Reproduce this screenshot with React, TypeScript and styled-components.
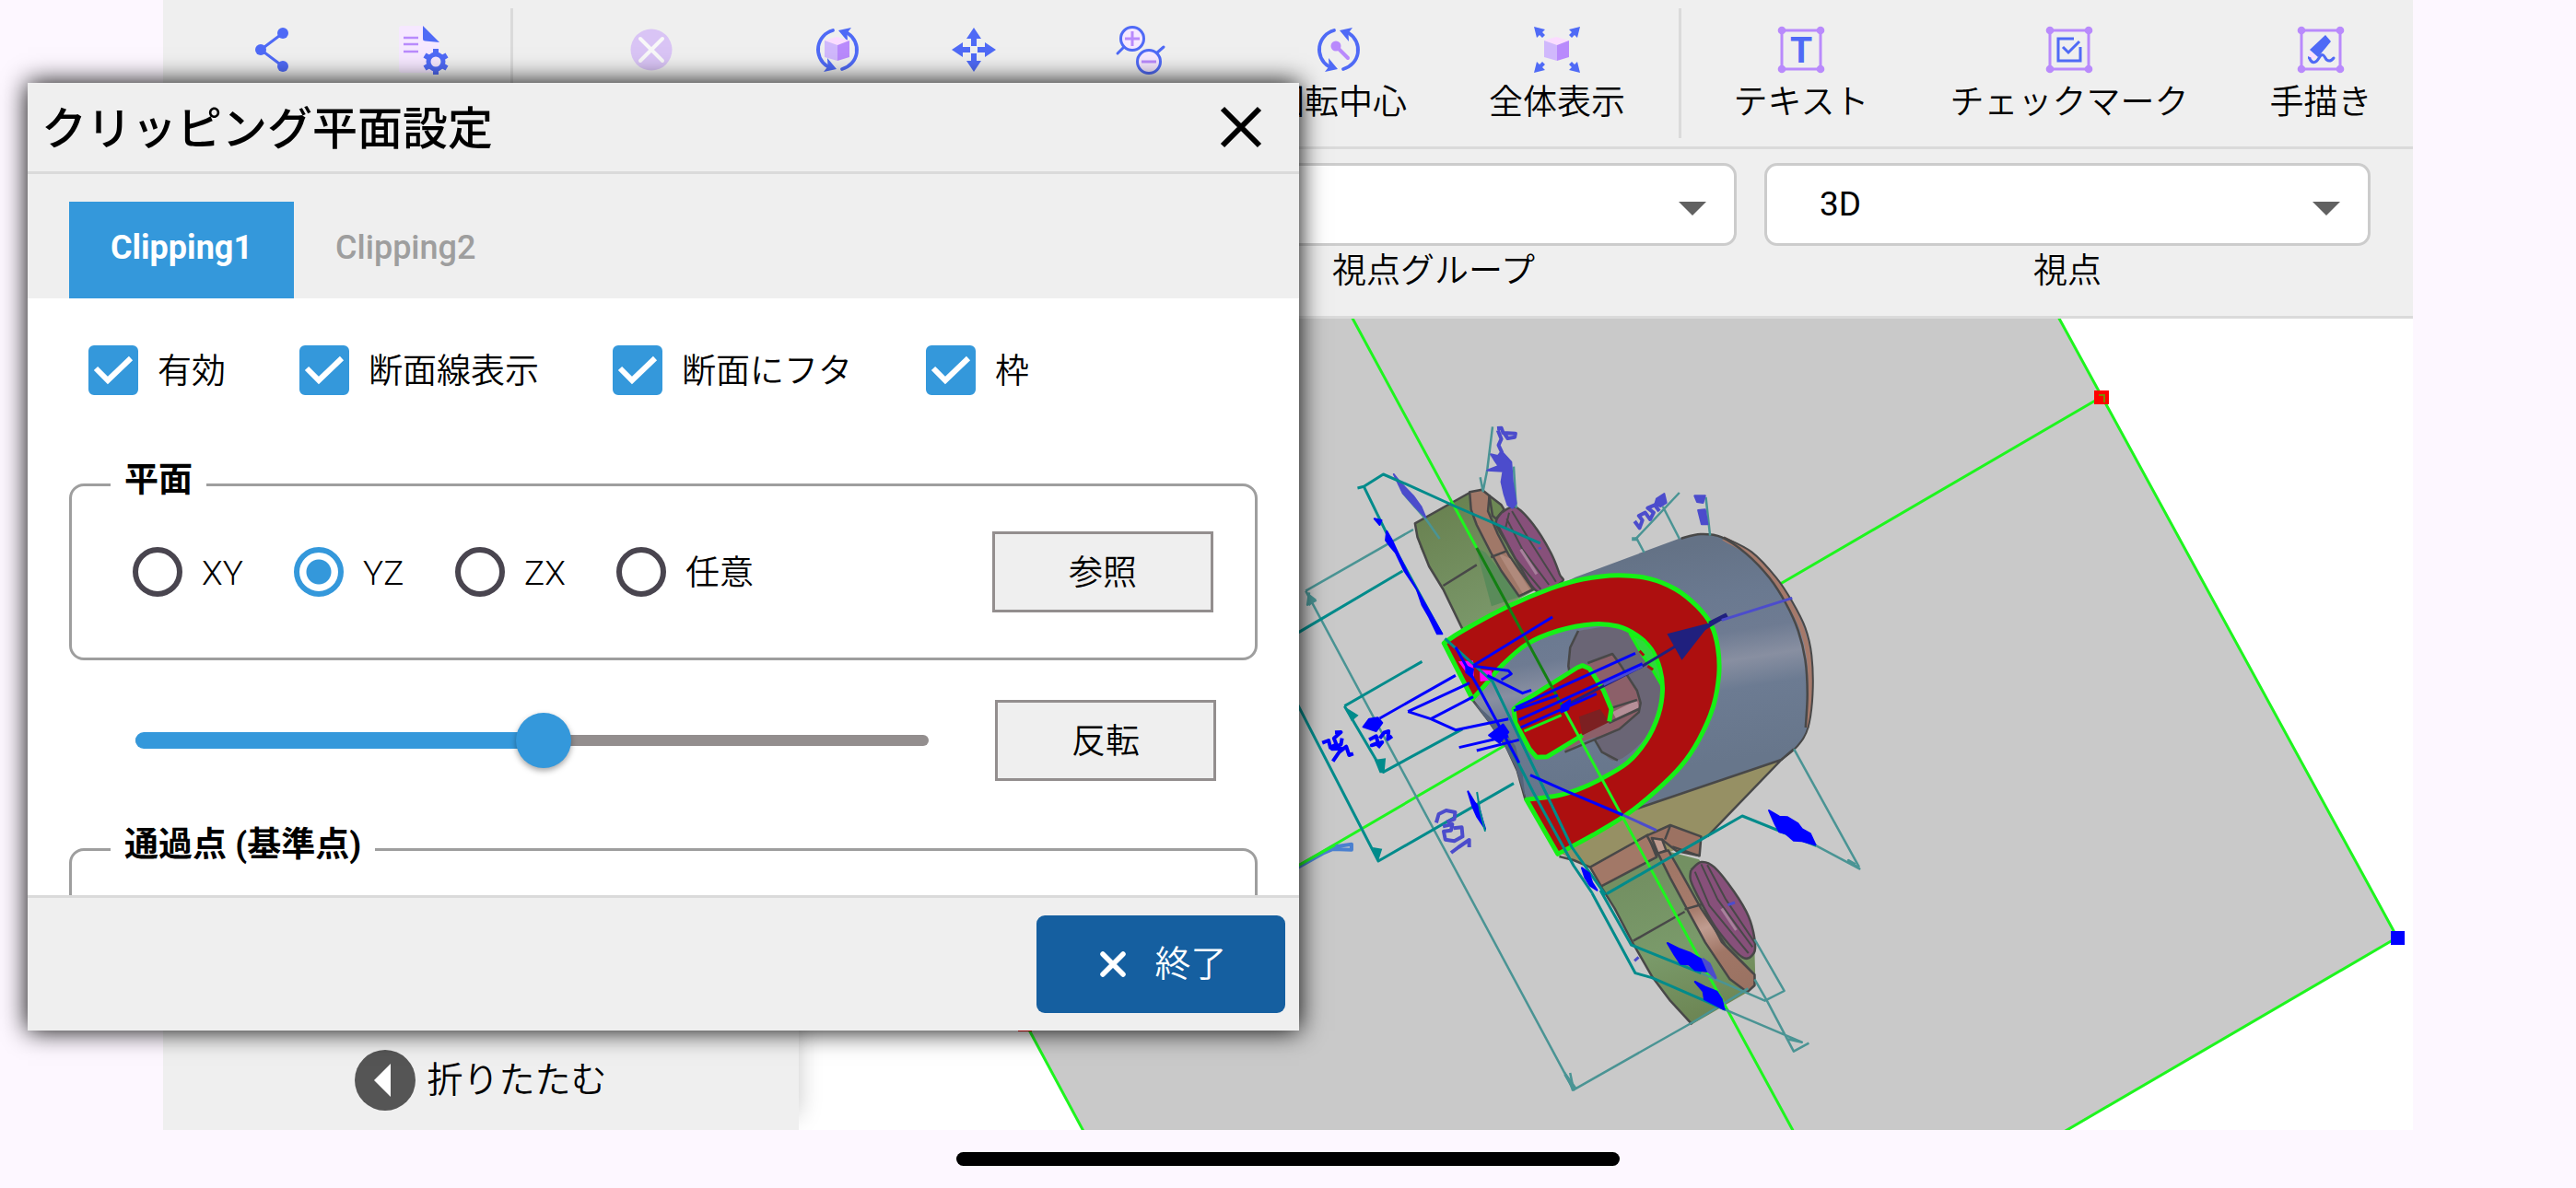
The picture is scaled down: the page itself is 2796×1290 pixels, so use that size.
import React, { useState } from "react";
import styled, { createGlobalStyle, css } from "styled-components";

const color = {
  page: "#fdf7ff",
  bar: "#efefef",
  rule: "#dadada",
  accent: "#3498db",
  primary: "#155fa0",
  frame: "#9e9e9e",
  edge: "#938e8e",
  ink: "#000000",
  iconBlue: "#4f6af6",
  iconPurple: "#b98afc",
  iconLilac: "#d0b8fc",
  iconPink: "#fbdcff",
};

const GlobalStyle = createGlobalStyle`
  * { box-sizing: border-box; }
  body {
    margin: 0;
    background: ${color.page};
    color: ${color.ink};
    font-family: Roboto, "Noto Sans CJK JP", sans-serif;
    font-size: 37px;
    font-weight: 350;
    line-height: 44px;
  }
  button, input, select { font: inherit; color: inherit; }
`;

/* ---------- Page ---------- */

const Screen = styled.div`
  position: relative;
  display: flex;
  flex-direction: column;
  height: 100vh;
  min-height: 900px;
  padding: 0 177px;
  overflow: hidden;
`;

const Toolbar = styled.header`
  display: flex;
  padding-left: 34px;
  background: ${color.bar};
  border-bottom: 3px solid ${color.rule};
`;

const Tool = styled.button<{ $span: number }>`
  flex: ${(p) => p.$span} 1 0;
  display: flex;
  flex-direction: column;
  align-items: center;
  gap: 8px;
  min-width: 0;
  height: 159px;
  padding: 26px 0 0;
  border: 0;
  background: none;
  white-space: nowrap;
`;

const ToolDivider = styled.span`
  flex: 28 1 0;
  display: flex;
  justify-content: center;
  padding: 9px 0;

  &::before {
    content: "";
    width: 3px;
    background: ${color.rule};
  }
`;

const ViewBar = styled.section`
  display: flex;
  justify-content: flex-end;
  gap: 30px;
  height: 184px;
  padding: 15px 46px 0;
  background: ${color.bar};
  border-bottom: 3px solid ${color.rule};
`;

const Field = styled.label`
  display: flex;
  flex-direction: column;
  align-items: center;
  gap: 6px;
  width: 28%;
`;

const SelectBox = styled.span`
  position: relative;
  width: 100%;
`;

const Select = styled.select`
  display: block;
  appearance: none;
  width: 100%;
  height: 90px;
  padding: 0 90px 0 57px;
  border: 3px solid #cccccc;
  border-radius: 14px;
  background: #ffffff;
  font-weight: 400;
`;

const SelectArrow = styled.svg`
  position: absolute;
  right: 33px;
  top: 42px;
  width: 30px;
  height: 15px;
  pointer-events: none;
`;

const Stage = styled.main`
  flex: 1;
  display: grid;
  grid-template-columns: 100%;
  grid-template-rows: 100%;
  min-height: 0;
  overflow: hidden;
  background: #ffffff;
`;

const Model = styled.svg`
  grid-area: 1 / 1;
  display: block;
  width: 100%;
  height: 100%;

  path, polygon, polyline, line { vector-effect: non-scaling-stroke; }
`;

const SidePanel = styled.aside`
  grid-area: 1 / 1;
  display: flex;
  flex-direction: column;
  justify-content: flex-end;
  width: 690px;
  background: ${color.bar};
  box-shadow: 0 -16px 24px rgba(0, 0, 0, 0.22);
`;

const CollapseButton = styled.button`
  display: flex;
  align-items: center;
  justify-content: center;
  gap: 12px;
  height: 108px;
  padding: 0;
  border: 0;
  background: none;
  font-size: 39px;
`;

const HomeArea = styled.footer`
  display: flex;
  justify-content: center;
  height: 63px;
  padding-top: 24px;
`;

const HomeIndicator = styled.span`
  width: 720px;
  height: 15px;
  border-radius: 8px;
  background: #000000;
`;

/* ---------- Dialog ---------- */

const Dialog = styled.section`
  position: absolute;
  left: 30px;
  top: 90px;
  bottom: 171px;
  width: 1380px;
  max-width: calc(100% - 60px);
  display: flex;
  flex-direction: column;
  background: #ffffff;
  box-shadow: 0 0 26px #000000;
`;

const DialogHeader = styled.header`
  display: flex;
  align-items: center;
  justify-content: space-between;
  height: 99px;
  padding: 0 35px 0 15px;
  background: ${color.bar};
  border-bottom: 3px solid ${color.rule};
`;

const DialogTitle = styled.h1`
  margin: 0;
  padding-top: 6px;
  font-size: 49px;
  font-weight: 500;
  line-height: 60px;
`;

const IconButton = styled.button`
  display: flex;
  padding: 0;
  border: 0;
  background: none;
`;

const Tabs = styled.div`
  display: flex;
  align-items: flex-end;
  height: 135px;
  padding: 0 45px;
  background: ${color.bar};
`;

const Tab = styled.button<{ $active?: boolean }>`
  height: 105px;
  padding: 0 45px 6px;
  border: 0;
  font-size: 36px;
  font-weight: ${(p) => (p.$active ? 700 : 500)};
  background: ${(p) => (p.$active ? color.accent : "transparent")};
  color: ${(p) => (p.$active ? "#ffffff" : "#9e9e9e")};
`;

const DialogBody = styled.div`
  flex: 1;
  min-height: 0;
  overflow: hidden;
  padding: 51px 45px 0;
`;

const CheckRow = styled.div`
  display: flex;
  gap: 80px;
  padding-left: 21px;
`;

const Option = styled.label`
  display: flex;
  align-items: center;
  gap: 21px;
  white-space: nowrap;
`;

const OptionText = styled.span`
  min-width: 49px;
  padding-top: 4px;
`;

const marker = css`
  appearance: none;
  flex: none;
  width: 54px;
  height: 54px;
  margin: 0;
`;

const CheckBox = styled.span`
  display: grid;
  > * { grid-area: 1 / 1; }
  > svg { pointer-events: none; visibility: hidden; }
  > input:checked + svg { visibility: visible; }
`;

const CheckInput = styled.input`
  ${marker}
  border: 6px solid #49454f;
  border-radius: 6px;
  &:checked { border-color: ${color.accent}; background: ${color.accent}; }
`;

const RadioInput = styled.input`
  ${marker}
  border: 6px solid #49454f;
  border-radius: 50%;
  &:checked {
    border-color: ${color.accent};
    background: radial-gradient(circle, ${color.accent} 13px, transparent 14px);
  }
`;

const Group = styled.fieldset<{ $top: number }>`
  min-width: 0;
  margin: ${(p) => p.$top}px 0 0;
  padding: 25px 45px 49px 66px;
  border: 3px solid ${color.frame};
  border-radius: 16px;
`;

const GroupTitle = styled.legend`
  margin-left: -24px;
  padding: 0 15px 8px;
  font-weight: 700;
`;

const GroupRow = styled.div`
  display: flex;
  align-items: center;
  justify-content: space-between;
  min-height: 88px;
`;

const RadioRow = styled.div`
  display: flex;
  gap: 51px;
`;

const PlainButton = styled.button`
  width: 240px;
  height: 88px;
  padding: 4px 0 0;
  border: 3px solid ${color.edge};
  background: ${color.bar};
`;

const SliderRow = styled.div`
  display: flex;
  align-items: center;
  gap: 72px;
  margin-top: 43px;
  padding: 0 45px 0 72px;
`;

const Slider = styled.div`
  flex: 1;
  display: grid;
  align-items: center;
  > * { grid-area: 1 / 1; }
`;

const Track = styled.span`
  height: 12px;
  border-radius: 6px;
  background: ${color.edge};
`;

const ActiveTrack = styled.span`
  height: 18px;
  border-radius: 9px;
  background: ${color.accent};
`;

const Range = styled.input`
  appearance: none;
  width: 100%;
  height: 60px;
  margin: 0;
  background: none;

  &::-webkit-slider-thumb {
    appearance: none;
    width: 60px;
    height: 60px;
    border-radius: 50%;
    background: ${color.accent};
    box-shadow: 0 3px 6px rgba(0, 0, 0, 0.35);
  }
`;

const DialogFooter = styled.footer`
  display: flex;
  align-items: center;
  justify-content: flex-end;
  height: 147px;
  padding: 0 15px;
  background: ${color.bar};
  border-top: 3px solid ${color.rule};
`;

const PrimaryButton = styled.button`
  display: flex;
  align-items: center;
  justify-content: center;
  gap: 25px;
  width: 270px;
  height: 106px;
  border: 0;
  border-radius: 9px;
  background: ${color.primary};
  color: #ffffff;
  font-size: 39px;
`;

/* ---------- Icons ---------- */

const Glyph = ({ children }: { children: React.ReactNode }) => (
  <svg width="56" height="56" viewBox="0 0 56 56" fill="none" aria-hidden="true">
    {children}
  </svg>
);

const ShareIcon = () => (
  <Glyph>
    <path d="M40 10 16 28l24 18" stroke={color.iconBlue} strokeWidth="3" />
    <g fill={color.iconBlue}>
      <circle cx="40" cy="10" r="6" />
      <circle cx="16" cy="28" r="6" />
      <circle cx="40" cy="46" r="6" />
    </g>
  </Glyph>
);

const DocSettingsIcon = () => (
  <Glyph>
    <path d="M4 2h23l18 18v33H4a3 3 0 0 1-3-3V5a3 3 0 0 1 3-3z" fill="#f6e8ff" />
    <path d="M6 15h16M6 22h16M6 30h16" stroke={color.iconPurple} strokeWidth="2.4" />
    <path d="M27 2v14q0 2.500 2.500 2.500L45 20z" fill={color.iconBlue} />
    <circle cx="41" cy="41" r="8" stroke={color.iconBlue} strokeWidth="5" />
    <path
      d="M41 27v5M41 50v5M29 34l4.500 2.600M48.500 45.400 53 48M29 48l4.500-2.600M48.500 36.600 53 34"
      stroke={color.iconBlue}
      strokeWidth="6"
    />
  </Glyph>
);

const CancelIcon = () => (
  <Glyph>
    <circle cx="28" cy="28" r="22.500" fill="#d9c4f5" />
    <path d="M16 16l24 24M40 16 16 40" stroke="#f8f8f8" strokeWidth="4" strokeLinecap="round" />
  </Glyph>
);

const Orbit = () => (
  <>
    <path
      d="M23 7A21.500 21.500 0 0 0 17 46M33 49A21.500 21.500 0 0 0 39 10"
      stroke={color.iconBlue}
      strokeWidth="3.800"
      strokeLinecap="round"
    />
    <path d="M43 4 29 7l10 12-.5-9zM13 52l14-3-10-12 .5 9z" fill={color.iconBlue} />
  </>
);

const Cube = () => (
  <>
    <path d="M27 14l14 4-13 5-14-5z" fill={color.iconPink} />
    <path d="M14 18l14 5v17l-14-4z" fill={color.iconLilac} />
    <path d="M28 23l13-5v18l-13 4z" fill={color.iconPurple} />
  </>
);

const RotateIcon = () => (
  <Glyph>
    <Orbit />
    <Cube />
  </Glyph>
);

const MoveIcon = () => (
  <Glyph>
    {[0, 90, 180, 270].map((a) => (
      <path
        key={a}
        d="M28 4l8 12h-5v8h-6v-8h-5z"
        fill={color.iconBlue}
        transform={`rotate(${a} 28 28)`}
      />
    ))}
  </Glyph>
);

const ZoomIcon = () => (
  <Glyph>
    <g stroke={color.iconBlue} strokeWidth="3" strokeLinecap="round" fill="#f6e8ff">
      <path d="M10 25l-7 7M45 32l8-7" />
      <circle cx="19" cy="16" r="12.500" />
      <circle cx="37" cy="41" r="12.500" />
    </g>
    <path d="M11 16h16M19 8v16M29 41h16" stroke={color.iconPurple} strokeWidth="3" />
  </Glyph>
);

const PivotIcon = () => (
  <Glyph>
    <Orbit />
    <circle cx="25" cy="24" r="5.500" fill={color.iconPurple} />
    <path d="M26 25l12 12" stroke={color.iconPurple} strokeWidth="4" strokeLinecap="round" />
  </Glyph>
);

const FitIcon = () => (
  <Glyph>
    <Cube />
    {[0, 90, 180, 270].map((a) => (
      <path
        key={a}
        d="M3 3l12 3-3 3 3 3-3 3-3-3-3 3z"
        fill={color.iconBlue}
        transform={`rotate(${a} 28 28)`}
      />
    ))}
  </Glyph>
);

const Frame = () => (
  <>
    <rect x="7" y="7" width="42" height="42" stroke={color.iconPurple} strokeWidth="3" />
    <g fill={color.iconPurple}>
      <circle cx="7" cy="7" r="4.300" />
      <circle cx="49" cy="7" r="4.300" />
      <circle cx="7" cy="49" r="4.300" />
      <circle cx="49" cy="49" r="4.300" />
    </g>
  </>
);

const TextIcon = () => (
  <Glyph>
    <Frame />
    <text x="28" y="42" textAnchor="middle" fontSize="39" fontWeight="700" fill={color.iconBlue}>
      T
    </text>
  </Glyph>
);

const CheckMarkIcon = () => (
  <Glyph>
    <Frame />
    <path d="M33 16H16v24h24V25" stroke={color.iconBlue} strokeWidth="3" />
    <path d="M21 25l6 6 12-12" stroke={color.iconBlue} strokeWidth="3" />
  </Glyph>
);

const FreehandIcon = () => (
  <Glyph>
    <Frame />
    <path d="M33 12l6 7-14 17-9-8z" fill={color.iconBlue} />
    <path d="M16 29l8 7-5 2-4-2z" fill={color.iconPink} />
    <path d="M14 35l4 2-4 1z" fill={color.iconBlue} />
    <path
      d="M16 38c3 6 7 4 10-1s5-4 7 0 6 4 9 0"
      stroke={color.iconBlue}
      strokeWidth="3"
      strokeLinecap="round"
    />
  </Glyph>
);

/* ---------- 3D view ---------- */

const line = "#484848";
const cutGreen = "#16f016";
const teal = "#008b8b";
const tealBack = "#4a9494";
const blueBack = "#4c4ccc";

type Point = [number, number];

/* Catmull-Rom segments through the points, starting at the first one. */
const curve = (pts: Point[]) =>
  pts
    .slice(0, -1)
    .map((p, i) => {
      const before = pts[i - 1] ?? p;
      const next = pts[i + 1];
      const after = pts[i + 2] ?? next;
      const c1 = [p[0] + (next[0] - before[0]) / 6, p[1] + (next[1] - before[1]) / 6];
      const c2 = [next[0] - (after[0] - p[0]) / 6, next[1] - (after[1] - p[1]) / 6];
      return `C${c1.join(" ")} ${c2.join(" ")} ${next.join(" ")}`;
    })
    .join("");

const from = (pts: Point[]) => `M${pts[0].join(" ")}${curve(pts)}`;

const archOuter: Point[] = [
  [437, 775], [490, 735], [620, 655], [740, 597], [830, 567], [930, 554], [1020, 565], [1095, 600],
  [1155, 655], [1195, 715], [1214, 790], [1217, 880], [1200, 985], [1160, 1090], [1110, 1175],
  [1040, 1255], [957, 1332], [860, 1400], [760, 1462],
];
const archInner: Point[] = [
  [671, 1285], [758, 1272], [817, 1252], [875, 1222], [957, 1165], [1010, 1095], [1045, 1010],
  [1057, 930], [1050, 860], [1025, 795], [985, 750], [930, 720], [860, 713], [760, 735], [670, 780],
  [600, 850], [555, 910], [518, 957],
];
const rimOuter: Point[] = [
  [1230, 430], [1310, 478], [1380, 562], [1425, 640], [1462, 725], [1480, 815], [1483, 940],
  [1470, 1050], [1440, 1110], [1394, 1155],
];
const rimBand: Point[] = [
  [1230, 434], [1302, 482], [1371, 564], [1417, 645], [1453, 730], [1472, 820], [1476, 940],
  [1467, 1050],
];
const rimInner: Point[] = [
  [1110, 434], [1165, 420], [1225, 430], [1295, 484], [1360, 562], [1408, 648], [1442, 735],
  [1462, 830], [1468, 940], [1463, 1050],
];
const bore: Point[] = [
  [818, 735], [900, 722], [960, 738], [1025, 800], [1055, 870], [1050, 960], [1010, 1080],
  [930, 1157], [885, 1125], [860, 1060], [800, 920], [788, 850], [800, 780], [818, 735],
];
const upperDisc: Point[] = [
  [600, 350], [640, 332], [690, 388], [740, 480], [765, 550], [772, 575], [705, 608], [655, 530],
  [615, 450], [585, 385], [600, 350],
];
const lowerDisc: Point[] = [
  [975, 495], [1000, 468], [1032, 485], [1080, 565], [1115, 645], [1130, 720], [1128, 765],
  [1100, 778], [1040, 690], [1000, 600], [975, 530], [975, 495],
];

const ClippedModel = () => (
  <Model viewBox="177 346 2442 881" preserveAspectRatio="xMidYMid slice" fill="none" role="img" aria-label="3D">
    <defs>
      <linearGradient id="barrel" gradientUnits="userSpaceOnUse" x1="1000" y1="480" x2="1130" y2="1180">
        <stop offset="0" stopColor="#647286" />
        <stop offset="0.25" stopColor="#6a7990" />
        <stop offset="0.42" stopColor="#6e7b92" />
        <stop offset="0.55" stopColor="#888fa1" />
        <stop offset="0.68" stopColor="#6c7b92" />
        <stop offset="1" stopColor="#67768b" />
      </linearGradient>
      <linearGradient id="leaf" gradientUnits="userSpaceOnUse" x1="400" y1="360" x2="560" y2="680">
        <stop offset="0" stopColor="#6a8352" />
        <stop offset="1" stopColor="#799668" />
      </linearGradient>
      <linearGradient id="leafLow" gradientUnits="userSpaceOnUse" x1="820" y1="540" x2="1000" y2="980">
        <stop offset="0" stopColor="#739062" />
        <stop offset="0.5" stopColor="#7a9a6a" />
        <stop offset="1" stopColor="#6c8553" />
      </linearGradient>
      <linearGradient id="rod" gradientUnits="userSpaceOnUse" x1="920" y1="480" x2="1110" y2="880">
        <stop offset="0" stopColor="#a07666" />
        <stop offset="0.35" stopColor="#a67c6c" />
        <stop offset="0.5" stopColor="#c09c90" />
        <stop offset="0.7" stopColor="#a07666" />
        <stop offset="1" stopColor="#9a7262" />
      </linearGradient>
    </defs>

    {/* clipping plane */}
    <polygon points="1400,300 2210,300 2602,1018 2235,1232 1178,1232 1117,1119 900,715" fill="#c9c9c9" />
    <g stroke="#1ef51e" strokeWidth="3">
      <path d="M2210 300 2602 1018 2235 1232M1178 1232 1105 1096" />
      <path d="M2281 431 1874 668M1634 809 1380 957" />
    </g>
    <rect x="2273" y="424" width="16" height="15" fill="#ff0000" />
    <path d="M2278 429h6v8" stroke="#7a8a00" strokeWidth="2" />
    <rect x="2595" y="1011" width="15" height="15" fill="#0000ff" />
    <rect x="1105" y="1105" width="15" height="15" fill="#ff0000" />

    {/* upper arm */}
    <g transform="translate(1400 440) scale(0.38265 0.33333)" strokeWidth="2.500" strokeLinejoin="round">
      <path d="M355 385 460 320 510 285 560 295 605 340 650 420 700 600 490 730 435 600 395 525 370 465z" fill="url(#leaf)" />
      <path d="M510 285 355 385 362 430 395 525 435 600 490 730M435 588 530 520" stroke={line} />
      <path d="M528 462 555 480 640 600 650 625 572 655 545 540z" fill="#5a8b5a" />
      <path d="M510 283 545 275 566 295 562 345 590 420 622 490 690 600 650 622 600 540 570 480 530 390 514 340z" fill="#a07868" stroke={line} />
      <path d="M590 480 625 500 680 600 660 612z" fill="#b08a7c" />
      <path d="M570 495 615 475" stroke={line} />
      <path d="M566 295 600 325 608 340 585 370 575 360z" fill="#6d8854" stroke={line} />
      <path d={from(upperDisc)} fill="#87507a" stroke={line} />
      <path d="M630 345 680 440 755 575M615 370 660 470 735 585M590 390 640 500 712 600M622 350 612 400" stroke={line} strokeWidth="2" />
      <path d="M655 470 700 550" stroke="#a8819c" strokeWidth="3" />

      {/* barrel */}
      <path
        d={`M810 560 1110 432 1165 418 1230 430${curve(rimOuter)}L957 1325 667 1285 640 1180 610 1110 560 1020 500 930 700 620z`}
        fill="url(#barrel)"
      />
      <path d={from(rimBand)} stroke="#a5796a" strokeWidth="5" />
      <path d={from(rimInner)} stroke={line} />
      <path d={from(rimOuter)} stroke={line} strokeWidth="2" />
      <path d="M518 960 565 1030 615 1115 645 1190 668 1285" stroke={line} />
      <path d="M520 965 600 1050 640 1110 660 1200 668 1280 640 1180 600 1090z" fill="#56647a" />

      {/* bore */}
      <path d={from(bore)} fill="#6a6575" />
      <path d="M818 735 795 790 790 850 800 900M865 1090 885 1130 930 1157" stroke={line} />
      <path d="M840 845 915 810 935 840 980 925 995 980 985 1010 930 1060 830 1095 780 1130z" fill="#8c6069" />
      <path d="M915 1000 985 960 990 985 925 1020z" fill="#b58f97" />
      <path d="M845 840 915 810 940 850 985 930 995 970 990 1000 935 1055 780 1130M915 985 985 960M905 1035 990 990" stroke={line} />
    </g>

    {/* lower arm */}
    <g transform="translate(1400 780) scale(0.44643 0.33333)" strokeWidth="2.500" strokeLinejoin="round">
      <path d="M650 435 820 305 1195 135 1015 385 880 460 730 485 685 458z" fill="#969064" />
      <path d="M820 305 1195 135 1225 100M1195 135 1015 385M655 450 690 462 730 485" stroke={line} />
      <path d="M755 545 880 455 910 430 995 460 1060 620 1130 760 1132 860 1115 890 978 997 925 920 880 840 835 735 790 620z" fill="url(#leafLow)" />
      <path d="M755 545 790 620 835 735 880 840 925 920 978 997M835 725 960 630" stroke={line} />
      <path d="M730 485 870 380 892 452 757 547z" fill="#a27867" stroke={line} />
      <path d="M868 382 925 348 1000 385 996 448 940 432 905 395 895 445z" fill="#9c7262" stroke={line} />
      <path d="M880 390 905 395 915 430 895 440z" fill="#c09c90" stroke={line} />
      <path d="M925 350 912 395M930 418 996 448" stroke={line} />
      <path d="M895 440 920 430 950 500 1000 620 1060 740 1130 835 1130 870 1112 892 1070 850 1010 730 965 620 925 520z" fill="url(#rod)" stroke={line} />
      <path d="M960 622 1002 606" stroke={line} />
      <path d={from(lowerDisc)} fill="#87507a" stroke={line} />
      <path d="M1000 475 1040 590 1125 745M985 500 1020 610 1115 765M1015 478 1060 590 1130 730M1000 600 1050 730 1125 830" stroke={line} strokeWidth="2" />
      <path d="M1050 620 1085 690" stroke="#a8819c" strokeWidth="3" />
    </g>

    <g transform="translate(1400 440) scale(0.38265 0.33333)" strokeWidth="3" strokeLinejoin="round">
      {/* section faces */}
      <path
        d={`${from(archOuter)}L671 1285${curve(archInner)}z`}
        fill="#ad0f0f"
        stroke={cutGreen}
        strokeWidth="5"
      />
      <path d="M965 745 1005 765 1030 800 1052 870 1056 915 1025 855 1000 815z" fill="#30d83c" stroke={cutGreen} />
      <path d="M992 800 1004 815M1015 850 1030 862" stroke="#ad0f0f" />
      <path d="M635 990 655 970 815 855 830 848 850 858 890 930 912 990 906 1030 830 1075 730 1145 700 1147 680 1120 640 1035z" fill="#ad0f0f" />
      <path d="M820 1015 880 990 906 1032 830 1075z" fill="#7c2022" />
      <path d="M906 1030 912 990 890 930 850 858 830 848 815 855 655 970 635 990 640 1035 680 1120 700 1147 730 1145 830 1075" stroke={cutGreen} strokeWidth="5" />
      <path d="M665 1062 770 1010" stroke={cutGreen} />

      {/* centre line */}
      <path d="M150 -342 530 465M775 985 1440 2390" stroke="#1ef51e" />
      <path d="M530 465 775 985" stroke="#138013" />

      {/* axis */}
      <path d="M770 985 1000 850 1240 685" stroke="#20207e" />
      <path d="M890 910 1000 850" stroke={blueBack} />
      <path d="M1070 745 1195 708 1112 830z" fill="#20207e" />
      <path d="M1190 712 1240 683" stroke="#20207e" strokeWidth="5" />
      <path d="M1225 700 1425 628" stroke={blueBack} />

      {/* picked point */}
      <path d="M478 835 520 832 522 885 500 870zM538 862 572 865 575 895 540 900z" fill="#ff00ff" />

      {/* dimension lines behind the plane */}
      <g stroke={tealBack} strokeWidth="2.500">
        <path d="M45 605 350 405M45 605 805 2230 1143 2010 1300 1900" />
        <path d="M575 70 560 210 548 280 540 235M635 200 642 335M320 285 385 370 425 435" />
        <path d="M1105 285 980 437M1058 330 1105 435M985 437 1005 480M1180 300 1192 425" />
        <path d="M55 610 50 650 75 635M1430 1120 1615 1505M795 2175 805 2230 780 2180" />
      </g>
      <path d="M48 608 75 632 55 655zM970 430h18v12h-18zM780 2170 815 2225 800 2235z" fill={tealBack} />
      <g fill={blueBack} stroke={blueBack} strokeWidth="2">
        <path d="M570 160 590 165 600 150 628 185 632 250 642 320 632 335 618 325 608 290 600 250 605 215 560 212 592 198 580 178z" />
        <path d="M295 225 312 250 350 295 372 330 385 365 355 330 320 285z" />
        <path d="M1035 325 1040 305 1062 288 1068 318 1052 330zM1158 342 1178 340 1185 388 1168 388zM1148 295 1178 295 1172 318 1155 315z" />
        <path d="M705 466h8" />
      </g>
      <g stroke={blueBack} strokeWidth="4">
        <path d="M588 75 600 74 605 90 640 92 638 104 618 108 608 92M590 82 600 110 592 130 602 155" />
        <path d="M978 378 992 400 1000 375 990 360 1008 350 1022 372 1032 350 1015 335 1035 325 1048 345" />
      </g>

      {/* dimension lines in front */}
      <g stroke={teal} strokeWidth="3">
        <path d="M192 270 210 265 265 225 340 262 470 330 710 450" />
        <path d="M210 265 280 430 430 745M25 740 320 540" />
        <path d="M155 980 375 835M155 980 265 1195 490 1055M20 970 251 1485 635 1232" />
        <path d="M440 760 575 900 725 1260 800 1440 895 1595M610 1080 690 1260 805 1500 858 1590" />
      </g>
      <path d="M155 982 195 1010 175 1030zM240 1155 272 1150 268 1198 255 1198zM235 1440 262 1445 250 1488z" fill={teal} />

      <g stroke="#0000ff" strokeWidth="3">
        <path d="M520 848 745 690M470 788 540 930 650 1165" />
        <path d="M255 1020 470 880M335 998 510 905M335 998 400 1022 470 1058 620 1022M400 1022 520 950M520 850 620 865 628 875 600 895M560 880 660 938 685 928" />
        <path d="M635 995 760 945M640 985 980 808M650 1025 1000 842M655 1050 870 940" />
        <path d="M480 1115 620 1078M530 1125 650 1090M682 1205 780 1255 945 1335" />
      </g>
      <path d="M945 1335 1040 1385" stroke={blueBack} />
      <g fill="#0000ff" stroke="#0000ff" strokeWidth="2">
        <path d="M240 370 260 375 255 390zM275 410 290 440 310 490 340 560 365 610 400 680 432 745 418 745 395 690 375 650 360 600 325 540 300 480 285 460 272 440z" />
        <path d="M225 1022 250 1018 262 1035 245 1062 208 1048zM565 1075 605 1040 620 1065 595 1100zM770 980 795 960 790 990 770 1000zM500 850 520 860 515 885 500 870z" />
      </g>
      <g stroke="#0000ff" strokeWidth="4">
        <path d="M225 1090 245 1078 250 1100 232 1108 262 1098 250 1115M255 1085 268 1066 280 1062 278 1088 290 1078" />
        <path d="M92 1100 110 1092 115 1115 132 1105 125 1085 145 1065 128 1066M148 1085 145 1105 120 1120 150 1118M122 1160 140 1130 160 1112 168 1140 180 1135" />
      </g>
    </g>

    <g transform="translate(1400 780) scale(0.44643 0.33333)" strokeWidth="3" strokeLinejoin="round">
      <g stroke={teal}>
        <path d="M770 572 1000 395 1100 318 1280 415" />
        <path d="M735 570 840 830 880 845 1060 950M755 560 830 738 1000 830" />
      </g>
      <g stroke={tealBack} strokeWidth="2.500">
        <path d="M1280 415 1385 490 1358 462 1375 475M1000 830 1155 920 1202 888 1130 720M1130 850 1160 920 1225 1085 1262 1058M1060 950 1245 1055 1210 1045" />
      </g>
      <g fill="#0000ff" stroke="#0000ff" strokeWidth="2">
        <path d="M1165 300 1190 320 1210 322 1235 342 1245 360 1265 375 1278 412 1245 400 1225 398 1205 375 1190 370 1180 345z" />
        <path d="M918 732 945 750 975 765 1000 785 1018 825 985 820 970 802 950 800 935 770z" />
        <path d="M985 858 1010 875 1038 890 1050 915 1056 948 1030 930 1008 915 1005 890z" />
        <path d="M710 487 728 505 735 535 747 560 730 545 718 520z" />
        <path d="M433 238 450 275 460 290 468 330 475 360 455 320 445 290z" />
      </g>
      <path d="M1005 785 1020 800 1035 845 1018 825zM1065 608 1082 600M838 790 848 778" fill={blueBack} stroke={blueBack} />
      <path
        d="M356 340 362 312 380 300 402 306 400 328 382 338M372 352 395 345 392 365 374 368 378 395 400 400 420 385 418 355 398 358M392 438 410 420 436 396 436 420"
        stroke={blueBack}
        strokeWidth="4"
      />
      <path d="M455 240 462 300 475 368" stroke={teal} strokeWidth="2" />
      <path d="M20 485 80 440 100 420 150 410 150 428 105 426 80 440" stroke="#4a80d0" strokeWidth="4" />
      <path d="M20 480 110 412" stroke="#1ef51e" />
    </g>
  </Model>
);

/* ---------- Parts ---------- */

const ViewSelect = ({ label, options }: { label: string; options: string[] }) => (
  <Field>
    <SelectBox>
      <Select>
        {options.map((o) => (
          <option key={o}>{o}</option>
        ))}
      </Select>
      <SelectArrow viewBox="0 0 30 15" aria-hidden="true">
        <path d="M0 0h30L15 15z" fill="#616161" />
      </SelectArrow>
    </SelectBox>
    {label}
  </Field>
);

const CheckOption = ({ label }: { label: string }) => (
  <Option>
    <CheckBox>
      <CheckInput type="checkbox" defaultChecked />
      <svg width="54" height="54" viewBox="0 0 54 54" fill="none" aria-hidden="true">
        <path d="M8 25l13 13 25-24" stroke="#ffffff" strokeWidth="6" />
      </svg>
    </CheckBox>
    <OptionText>{label}</OptionText>
  </Option>
);

const planes = ["XY", "YZ", "ZX", "任意"];
const checks = ["有効", "断面線表示", "断面にフタ", "枠"];
const sliderMax = 1000;

const ClippingDialog = () => {
  const [plane, setPlane] = useState("YZ");
  const [offset, setOffset] = useState(516);

  return (
    <Dialog role="dialog" aria-labelledby="clipping-title">
      <DialogHeader>
        <DialogTitle id="clipping-title">クリッピング平面設定</DialogTitle>
        <IconButton type="button" aria-label="閉じる">
          <svg width="56" height="56" viewBox="0 0 56 56" fill="none" aria-hidden="true">
            <path d="M8 8l40 40M48 8 8 48" stroke="#000000" strokeWidth="6" />
          </svg>
        </IconButton>
      </DialogHeader>

      <Tabs role="tablist">
        <Tab type="button" role="tab" aria-selected="true" $active>
          Clipping1
        </Tab>
        <Tab type="button" role="tab" aria-selected="false">
          Clipping2
        </Tab>
      </Tabs>

      <DialogBody>
        <CheckRow>
          {checks.map((c) => (
            <CheckOption key={c} label={c} />
          ))}
        </CheckRow>

        <Group $top={71}>
          <GroupTitle>平面</GroupTitle>
          <GroupRow>
            <RadioRow>
              {planes.map((p) => (
                <Option key={p}>
                  <RadioInput
                    type="radio"
                    name="plane"
                    checked={plane === p}
                    onChange={() => setPlane(p)}
                  />
                  <OptionText>{p}</OptionText>
                </Option>
              ))}
            </RadioRow>
            <PlainButton type="button">参照</PlainButton>
          </GroupRow>
        </Group>

        <SliderRow>
          <Slider>
            <Track />
            <ActiveTrack style={{ width: `${(offset / sliderMax) * 100}%` }} />
            <Range
              type="range"
              aria-label="平面"
              min={0}
              max={sliderMax}
              value={offset}
              onChange={(e) => setOffset(Number(e.target.value))}
            />
          </Slider>
          <PlainButton type="button">反転</PlainButton>
        </SliderRow>

        <Group $top={48}>
          <GroupTitle>通過点 (基準点)</GroupTitle>
          <GroupRow />
        </Group>
      </DialogBody>

      <DialogFooter>
        <PrimaryButton type="button">
          <svg width="40" height="40" viewBox="0 0 40 40" fill="none" aria-hidden="true">
            <path d="M9 9l22 22M31 9 9 31" stroke="#ffffff" strokeWidth="5.500" strokeLinecap="round" />
          </svg>
          終了
        </PrimaryButton>
      </DialogFooter>
    </Dialog>
  );
};

export default function App() {
  return (
    <>
      <GlobalStyle />
      <Screen>
        <Toolbar>
          <Tool $span={168} type="button" aria-label="共有"><ShareIcon /></Tool>
          <Tool $span={162} type="button" aria-label="設定"><DocSettingsIcon /></Tool>
          <ToolDivider />
          <Tool $span={276} type="button" aria-label="解除"><CancelIcon /></Tool>
          <Tool $span={128} type="button" aria-label="回転"><RotateIcon /></Tool>
          <Tool $span={168} type="button" aria-label="移動"><MoveIcon /></Tool>
          <Tool $span={194} type="button" aria-label="ズーム"><ZoomIcon /></Tool>
          <Tool $span={236} type="button"><PivotIcon />回転中心</Tool>
          <Tool $span={238} type="button"><FitIcon />全体表示</Tool>
          <ToolDivider />
          <Tool $span={236} type="button"><TextIcon />テキスト</Tool>
          <Tool $span={346} type="button"><CheckMarkIcon />チェックマーク</Tool>
          <Tool $span={200} type="button"><FreehandIcon />手描き</Tool>
        </Toolbar>

        <ViewBar>
          <ViewSelect label="視点グループ" options={[""]} />
          <ViewSelect label="視点" options={["3D"]} />
        </ViewBar>

        <Stage>
          <ClippedModel />
          <SidePanel>
            <CollapseButton type="button">
              <svg width="66" height="66" viewBox="0 0 66 66" aria-hidden="true">
                <circle cx="33" cy="33" r="33" fill="#555555" />
                <path d="M39 15v36L21 33z" fill="#ffffff" />
              </svg>
              折りたたむ
            </CollapseButton>
          </SidePanel>
        </Stage>

        <HomeArea>
          <HomeIndicator />
        </HomeArea>

        <ClippingDialog />
      </Screen>
    </>
  );
}
